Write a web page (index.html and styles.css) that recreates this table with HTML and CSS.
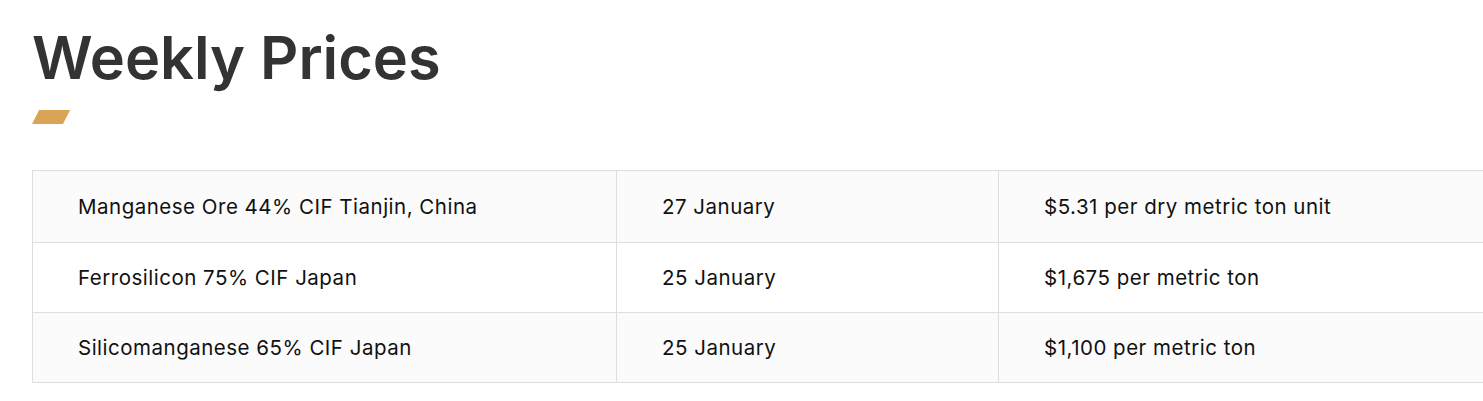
FILE: index.html
```html
<!DOCTYPE html>
<html>
<head>
<meta charset="utf-8">
<link rel="stylesheet" href="styles.css">
</head>
<body>
<section class="prices">
  <h2 class="title">Weekly Prices</h2>
  <div class="accent"></div>
  <table class="table">
    <colgroup>
      <col class="c1"><col class="c2"><col class="c3">
    </colgroup>
    <tbody>
      <tr class="odd first"><td>Manganese Ore 44% CIF Tianjin, China</td><td>27 January</td><td>$5.31 per dry metric ton unit</td></tr>
      <tr><td>Ferrosilicon 75% CIF Japan</td><td>25 January</td><td>$1,675 per metric ton</td></tr>
      <tr class="odd"><td>Silicomanganese 65% CIF Japan</td><td>25 January</td><td>$1,100 per metric ton</td></tr>
    </tbody>
  </table>
</section>
</body>
</html>
```
FILE: styles.css
```css
html, body {
  margin: 0;
  padding: 0;
  background: #fff;
  overflow: hidden;
}
.prices {
  padding: 17px 0 0 32px;
  font-family: Inter, "Noto Sans", sans-serif;
}
.title {
  margin: 0;
  font-size: 59.5px;
  font-weight: 600;
  color: #333;
  line-height: 80px;
  letter-spacing: 0;
}
.accent {
  margin-top: 13px;
  width: 31px;
  height: 14px;
  background: #d9a456;
  transform: skewX(-27deg);
  transform-origin: bottom left;
}
.table {
  margin-top: 46px;
  border-collapse: collapse;
  table-layout: fixed;
  width: 1480px;
}
.c1 { width: 584px; }
.c2 { width: 382px; }
.c3 { width: 514px; }
.table td {
  border: 1px solid #dedede;
  height: 70px;
  padding: 0 0 0 45px;
  font-size: 20.5px;
  letter-spacing: 0.5px;
  color: #111;
  box-sizing: border-box;
}
.table tr.first td {
  height: 72px;
}
.table tr.odd td {
  background: #fbfbfb;
}
```
